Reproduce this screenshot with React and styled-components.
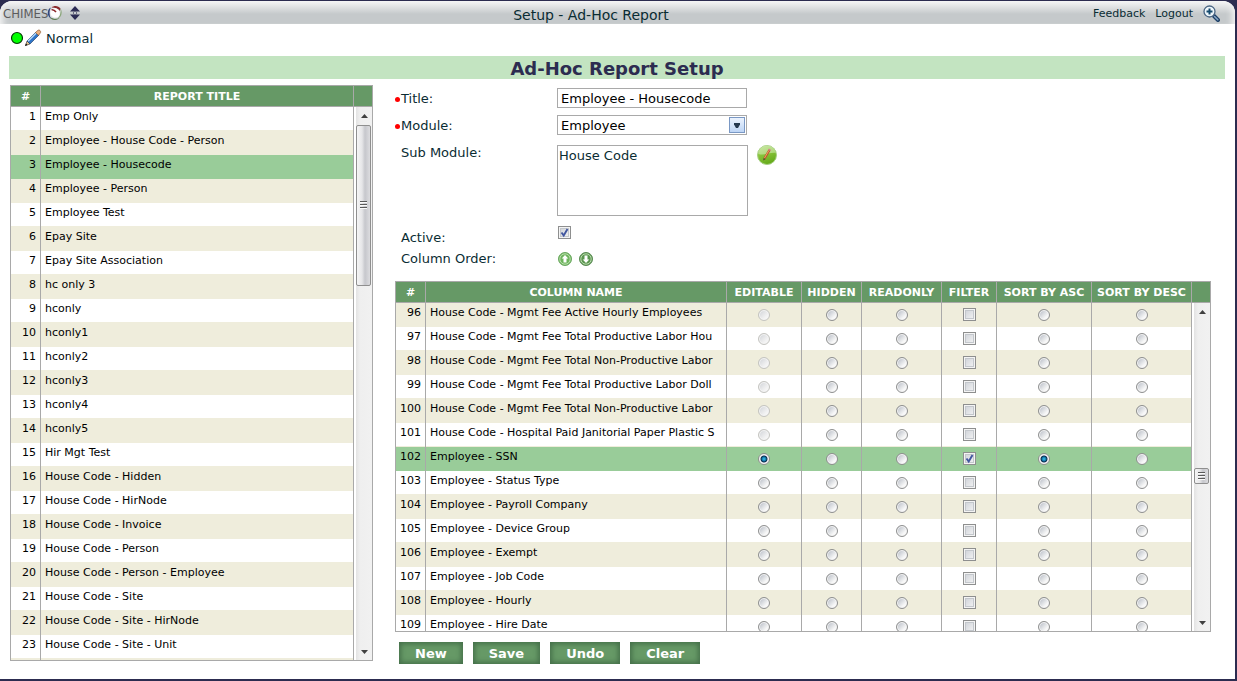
import React from "react";
import styled, { createGlobalStyle, css } from "styled-components";

const color = {
  frame: "#2c2c50",
  green: "#669966",
  line: "#a9a9a9",
  stripe: "#efeddc",
  selected: "#99cc99",
  band: "#c3e4c1",
  label: "#0a2c33",
};

const GlobalStyle = createGlobalStyle`
  * { box-sizing: border-box; }
  body {
    margin: 0;
    background: ${color.frame};
    font-family: Verdana, "DejaVu Sans", sans-serif;
    font-size: 13px;
    color: ${color.label};
  }
  button, input, select, textarea { font: inherit; }
`;

const Frame = styled.div`
  height: 100vh;
  padding: 1px 2px 2px 0;
`;

const Page = styled.div`
  height: 100%;
  display: flex;
  flex-direction: column;
  background: #fff;
  border-radius: 12px 12px 0 0;
  overflow: hidden;
`;

const TopBar = styled.header`
  flex: none;
  height: 23px;
  display: flex;
  align-items: center;
  background: linear-gradient(#f6f6f6 0, #e0e2e3 6px, #c5c9cb 13px, #c5c9cb 100%);
  box-shadow: inset 8px 0 6px -5px #f4f4f4, inset -8px 0 6px -5px #f4f4f4;
`;

const Brand = styled.div`
  flex: 0 0 90px;
  display: flex;
  align-items: center;
  padding: 1px 0 0 3px;
`;

const BrandName = styled.span`
  font: 13px "DejaVu Sans Condensed", Roboto, sans-serif;
  color: #5c5c5e;
  width: 44px;
  white-space: nowrap;
`;

const IconButton = styled.button`
  display: block;
  padding: 0;
  border: 0;
  background: none;
  line-height: 0;
  margin-left: ${(p) => p.$gap || 0}px;
`;

const PageName = styled.div`
  flex: 1;
  text-align: center;
  font-size: 14px;
  padding-top: 4px;
  line-height: 16px;
`;

const Nav = styled.nav`
  display: flex;
  align-items: center;
  gap: 10px;
  padding: 2px 15px 0 1px;
  font-size: 11px;
  line-height: 16px;
`;

const NavLink = styled.a`
  color: ${color.label};
  text-decoration: none;
`;

const Status = styled.div`
  flex: none;
  height: 32px;
  display: flex;
  align-items: center;
  padding: 0 10px 4px;
`;

const StatusText = styled.span`
  padding-left: 4px;
`;

const Banner = styled.h1`
  flex: none;
  margin: 0 10px 6px 9px;
  height: 23px;
  line-height: 25px;
  background: ${color.band};
  color: ${color.frame};
  font-size: 18px;
  font-weight: bold;
  text-align: center;
`;

const Main = styled.main`
  flex: 1;
  min-height: 0;
  display: flex;
  gap: 22px;
  padding: 0 15px 15px 10px;
`;

const Sidebar = styled.section`
  flex: 0 0 30%;
  display: flex;
  padding-bottom: 3px;
`;

const Detail = styled.section`
  flex: 1;
  min-width: 0;
  display: flex;
  flex-direction: column;
  padding-right: 9px;
`;

/* Grids */

const GridPanel = styled.div`
  flex: 1;
  min-width: 0;
  min-height: 0;
  display: flex;
  border: 1px solid ${color.line};
  overflow: hidden;
`;

const Viewport = styled.div`
  flex: 1;
  min-width: 0;
  overflow: hidden;
`;

const Table = styled.table`
  width: 100%;
  table-layout: fixed;
  border-collapse: separate;
  border-spacing: 0;
  font-size: 11px;
  color: #000;
`;

const Col = styled.col`
  width: ${(p) => (p.$w ? `${p.$w}px` : "auto")};
`;

const headCell = css`
  height: 21px;
  background: ${color.green};
  border-bottom: 1px solid ${color.line};
`;

const Th = styled.th`
  ${headCell}
  padding: 2px 0 0;
  border-right: 1px solid ${color.line};
  color: #fff;
  line-height: 18px;
  white-space: nowrap;
`;

const Row = styled.tr`
  background: ${(p) => (p.$selected ? color.selected : p.$striped ? color.stripe : "#fff")};
  --edge: ${(p) => (p.$selected ? color.selected : color.stripe)};
`;

const Td = styled.td`
  height: 24px;
  padding: 3px 4px 7px;
  border-right: 1px solid ${color.line};
  box-shadow: inset 0 -1px var(--edge);
  line-height: 14px;
  text-align: ${(p) => p.$align || "left"};
  white-space: nowrap;
  overflow: hidden;
`;

const ControlTd = styled(Td)`
  padding: 0 0 1px;
  line-height: 0;
  text-align: center;
`;

const boxBase = css`
  appearance: none;
  margin: 0;
  vertical-align: middle;
`;

const Radio = styled.input.attrs({ type: "radio" })`
  ${boxBase}
  width: 12px;
  height: 12px;
  border: 1px solid #8e8f8f;
  border-radius: 50%;
  background: linear-gradient(135deg, #bfc4cc 2px, #f8f8f8 10px);
  box-shadow: inset 0 0 0 1px #f4f4f4;
  &:checked {
    background: radial-gradient(circle, #3fc4ee 0, #0d76a8 2px, #0b2a48 3px, #f4f4f4 4px);
  }
  &:disabled {
    border-color: #c4c4c0;
    background: linear-gradient(135deg, #d6d8dc 2px, #f4f4f4 10px);
  }
`;

const CheckBox = styled.input.attrs({ type: "checkbox" })`
  ${boxBase}
  width: 13px;
  height: 13px;
  border: 1px solid #8e8f8f;
  background: linear-gradient(135deg, #cbcfd5, #f6f6f6);
  box-shadow: inset 0 0 0 1px #f4f4f4, inset 0 0 0 2px #c3c7cc;
`;

const CheckWrap = styled.span`
  display: inline-grid;
  vertical-align: middle;
  > * { grid-area: 1 / 1; }
  > svg { pointer-events: none; }
`;

const ScrollColumn = styled.div`
  flex: 0 0 18px;
  display: flex;
  flex-direction: column;
`;

const ScrollHead = styled.div`
  ${headCell}
  flex: none;
`;

const ScrollTrack = styled.div`
  flex: 1;
  margin-left: 2px;
  display: flex;
  flex-direction: column;
  background: linear-gradient(90deg, #e3e3e3, #efefef 4px, #f1f1f1);
`;

const ScrollArrow = styled.button`
  flex: 0 0 17px;
  padding: 0;
  border: 0;
  background: none;
  line-height: 0;
`;

const ScrollSpace = styled.div`
  flex: ${(p) => p.$grow} 1 0;
`;

const ScrollThumb = styled.div`
  flex: 0 0 ${(p) => p.$size}px;
  width: 15px;
  border: 1px solid #8f8f8f;
  border-radius: 2px;
  background: linear-gradient(90deg, #f5f5f5 0, #e6e6e8 5px, #c6c7cc 8px, #dcdcdf 13px);
  display: grid;
  place-items: center;
`;

/* Form */

const Field = styled.div`
  flex: none;
  display: flex;
  align-items: ${(p) => p.$align || "center"};
  min-height: ${(p) => p.$height || 20}px;
  margin-top: ${(p) => p.$gap}px;
`;

const Label = styled.label`
  flex: 0 0 162px;
  display: flex;
  align-items: center;
  padding-left: ${(p) => (p.$required ? 0 : 6)}px;
  padding-top: ${(p) => (p.$required ? 2 : 0)}px;
  line-height: 16px;
`;

const Dot = styled.span`
  width: 5px;
  height: 5px;
  margin-right: 1px;
  border-radius: 50%;
  background: #f00;
`;

const inputBox = css`
  border: 1px solid ${color.line};
  border-radius: 0;
  background: #fff;
  outline: 0;
`;

const TextInput = styled.input`
  ${inputBox}
  width: 190px;
  height: 20px;
  padding: 0 3px;
  color: #000;
`;

const SelectBox = styled.div`
  ${inputBox}
  display: grid;
  width: 190px;
  height: 20px;
  align-items: center;
  > * { grid-area: 1 / 1; }
  > svg { justify-self: end; margin-right: 1px; pointer-events: none; }
`;

const Select = styled.select`
  appearance: none;
  width: 100%;
  height: 18px;
  padding: 0 3px;
  border: 0;
  outline: 0;
  background: none;
  color: #000;
`;

const TextArea = styled.textarea`
  ${inputBox}
  width: 191px;
  height: 71px;
  padding: 2px 1px;
  resize: none;
  line-height: 16px;
  color: ${color.label};
`;

const OrderButtons = styled.div`
  display: flex;
  gap: 7px;
  padding-left: 1px;
`;

const ActiveBox = styled.span`
  align-self: flex-start;
  padding-left: 1px;
  line-height: 0;
`;

const GridArea = styled.div`
  flex: 1;
  min-height: 0;
  display: flex;
  margin-top: 14px;
`;

const Actions = styled.div`
  flex: none;
  display: flex;
  gap: 10px;
  padding: 10px 4px 0;
`;

const ActionButton = styled.button`
  height: 22px;
  padding: 1px 16px 0;
  border: 0;
  background: ${color.green};
  box-shadow: inset 0 0 5px 2px #45704a;
  color: #fff;
  font-weight: bold;
  line-height: 20px;
`;

/* Icons */

const Swirl = () => (
  <svg width="16" height="16" viewBox="0 0 16 16" fill="none">
    <circle cx="8" cy="8" r="6.500" fill="#dfe2e4" />
    <path d="M4.500 2.500C7 .2 11.500.5 13.500 3.500L13 6C11.500 3.500 8 2.500 4.500 2.500Z" fill="#8c2a2c" />
    <path d="M13.500 3.500c2.200 3.500 1.300 7.500-1.500 9.500l-1.500.5c2.500-2.500 3.500-6 3-10Z" fill="#8ba67c" />
    <path d="M12.500 13c-2.500 2.500-6 2.700-8.500.8l-1-1.800c3 2 6.500 2.300 9.500 1Z" fill="#5f7f55" />
    <path d="M4 13.800C.5 11.500-.2 7 2 3.800L4 2.500C2 6 2.200 10 4 13.800Z" fill="#34477c" />
    <path d="M4.500 4c3-1.500 7-.5 8 3s-1 5-3.500 5.500S3.500 11 3.500 8c0-1.500.3-3 1-4Z" fill="#fff" />
    <path d="M4.500 4.500c2 .2 3.500 1 4.500 2.500" stroke="#8c2a2c" strokeWidth="1.500" />
  </svg>
);

const UpDown = () => (
  <svg width="10" height="14" viewBox="0 0 10 14">
    <path d="M5 0l5 5.500H0zM5 14l5-5.500H0z" fill="#2c2c55" />
    <circle cx="5" cy="7" r="1.700" fill="#c9cdd2" stroke="#53536f" strokeWidth=".8" />
  </svg>
);

const Magnifier = () => (
  <svg width="17" height="17" viewBox="0 0 17 17" fill="none">
    <path d="M10 10l5 5" stroke="#1d3f66" strokeWidth="4" strokeLinecap="round" />
    <path d="M11.500 11.500l3.300 3.300" stroke="#86a6c6" strokeWidth="1.500" strokeLinecap="round" />
    <circle cx="6.500" cy="6.500" r="5.500" fill="#eef6fb" stroke="#4a6583" strokeWidth="1.300" />
    <path d="M6.500 3.500v6M3.500 6.500h6" stroke="#14496d" strokeWidth="2" />
  </svg>
);

const StatusDot = () => (
  <svg width="14" height="14" viewBox="0 0 14 14">
    <circle cx="7" cy="7" r="5.500" fill="#0f0" stroke="#063806" strokeWidth="1.200" />
  </svg>
);

const Pencil = () => (
  <svg width="18" height="18" viewBox="0 0 18 18">
    <path d="M1.500 16.500L3 12l3 3z" fill="#e8c48a" stroke="#2b2b2b" strokeWidth=".6" />
    <path d="M3 12L12 3l3 3L6 15z" fill="#2f76c9" stroke="#1b3358" strokeWidth=".6" />
    <path d="M4 12.300l8.500-8.500" stroke="#b5dafa" strokeWidth="1.500" />
    <path d="M11.500 3.500L14 1.200q1.200-.6 2 .3t.6 2L14.500 6.500z" fill="#eeb07a" stroke="#7a4a22" strokeWidth=".6" />
    <path d="M1 17l1-2.500L3.500 16z" fill="#111" />
  </svg>
);

const DropIcon = () => (
  <svg width="16" height="16" viewBox="0 0 16 16">
    <defs>
      <linearGradient id="drop" x2="0" y2="1">
        <stop offset="0" stopColor="#edf4fe" />
        <stop offset="1" stopColor="#bcd4f5" />
      </linearGradient>
    </defs>
    <rect x=".5" y=".5" width="15" height="15" fill="url(#drop)" stroke="#7a98c4" />
    <path d="M5 6h6v1.500L9 11H7L5 7.500z" fill="#24384f" />
  </svg>
);

const EditIcon = () => (
  <svg width="20" height="20" viewBox="0 0 20 20">
    <defs>
      <linearGradient id="edit" x2=".4" y2="1">
        <stop offset="0" stopColor="#b9e08a" />
        <stop offset=".45" stopColor="#8cc63e" />
        <stop offset="1" stopColor="#67ab1c" />
      </linearGradient>
    </defs>
    <circle cx="10" cy="10" r="9.500" fill="url(#edit)" stroke="#a6cf83" />
    <path d="M1.500 9a8.500 8 0 0 1 17-1C14 7 7 11 1.500 9Z" fill="#d9efbd" opacity=".55" />
    <path d="M7.500 13.500L12.500 5" stroke="#b8552a" strokeWidth="2.400" />
    <path d="M7.500 13L12 5.300" stroke="#f2a065" />
    <path d="M12.200 5.400l.7-1.300" stroke="#d77f8f" strokeWidth="2.400" />
    <path d="M6.200 15.500l.4-2.500 2 1.200z" fill="#5a4230" />
  </svg>
);

const OrderIcon = ({ down }) => (
  <svg width="14" height="14" viewBox="0 0 14 14">
    <circle cx="7" cy="7" r="6.500" fill={down ? "#5b9650" : "#6db45c"} stroke={down ? "#5a8a54" : "#6aa860"} />
    <circle cx="7" cy="7" r="5.200" fill="none" stroke="#c4e2b8" strokeWidth=".9" />
    <path
      d="M7 3l3.300 3.500H8.500V10.500h-3V6.500H3.700z"
      fill="#fff"
      transform={down ? "rotate(180 7 7)" : undefined}
    />
  </svg>
);

const Tick = () => (
  <svg width="13" height="13" viewBox="0 0 13 13" fill="none">
    <path d="M3.500 6.500l2.200 3L9.500 3" stroke="#4257a0" strokeWidth="1.900" />
  </svg>
);

const Arrow = ({ down }) => (
  <svg width="7" height="4" viewBox="0 0 7 4">
    <path d={down ? "M0 0h7L3.500 4z" : "M0 4h7L3.500 0z"} fill="#404040" />
  </svg>
);

const Grip = () => (
  <svg width="7" height="9" viewBox="0 0 7 9">
    <path d="M0 .5h7M0 3.500h7M0 6.500h7" stroke="#5a5a5a" />
    <path d="M0 1.500h7M0 4.500h7M0 7.500h7" stroke="#fafafa" />
  </svg>
);

const Check = (props) => (
  <CheckWrap>
    <CheckBox {...props} />
    {props.defaultChecked && <Tick />}
  </CheckWrap>
);

const ScrollBar = ({ before, size, after }) => (
  <ScrollColumn>
    <ScrollHead />
    <ScrollTrack>
      <ScrollArrow type="button" aria-label="Scroll up"><Arrow /></ScrollArrow>
      <ScrollSpace $grow={before} />
      <ScrollThumb $size={size}><Grip /></ScrollThumb>
      <ScrollSpace $grow={after} />
      <ScrollArrow type="button" aria-label="Scroll down"><Arrow down /></ScrollArrow>
    </ScrollTrack>
  </ScrollColumn>
);

const reports = [
  "Emp Only", "Employee - House Code - Person", "Employee - Housecode", "Employee - Person",
  "Employee Test", "Epay Site", "Epay Site Association", "hc only 3", "hconly", "hconly1",
  "hconly2", "hconly3", "hconly4", "hconly5", "Hir Mgt Test", "House Code - Hidden",
  "House Code - HirNode", "House Code - Invoice", "House Code - Person",
  "House Code - Person - Employee", "House Code - Site", "House Code - Site - HirNode",
  "House Code - Site - Unit",
];

const columns = [
  "House Code - Mgmt Fee Active Hourly Employees",
  "House Code - Mgmt Fee Total Productive Labor Hou",
  "House Code - Mgmt Fee Total Non-Productive Labor",
  "House Code - Mgmt Fee Total Productive Labor Doll",
  "House Code - Mgmt Fee Total Non-Productive Labor",
  "House Code - Hospital Paid Janitorial Paper Plastic S",
  "Employee - SSN", "Employee - Status Type", "Employee - Payroll Company",
  "Employee - Device Group", "Employee - Exempt", "Employee - Job Code",
  "Employee - Hourly", "Employee - Hire Date",
].map((name, i) => ({ id: 96 + i, name, locked: i < 6, selected: i === 6 }));

const ReportGrid = () => (
  <GridPanel>
    <Viewport>
      <Table>
        <colgroup><Col $w={30} /><Col /></colgroup>
        <thead><tr><Th>#</Th><Th>REPORT TITLE</Th></tr></thead>
        <tbody>
          {reports.map((name, i) => (
            <Row key={name} $striped={i % 2 === 1} $selected={i === 2}>
              <Td $align="right">{i + 1}</Td>
              <Td>{name}</Td>
            </Row>
          ))}
          <Row $striped><Td /><Td /></Row>
        </tbody>
      </Table>
    </Viewport>
    <ScrollBar before={1} size={161} after={357} />
  </GridPanel>
);

const ColumnGrid = () => (
  <GridPanel>
    <Viewport>
      <Table>
        <colgroup>
          <Col $w={30} /><Col /><Col $w={75} /><Col $w={60} /><Col $w={80} />
          <Col $w={55} /><Col $w={95} /><Col $w={100} />
        </colgroup>
        <thead>
          <tr>
            <Th>#</Th><Th>COLUMN NAME</Th><Th>EDITABLE</Th><Th>HIDDEN</Th>
            <Th>READONLY</Th><Th>FILTER</Th><Th>SORT BY ASC</Th><Th>SORT BY DESC</Th>
          </tr>
        </thead>
        <tbody>
          {columns.map(({ id, name, locked, selected }) => (
            <Row key={id} $striped={id % 2 === 0} $selected={selected}>
              <Td $align="right">{id}</Td>
              <Td>{name}</Td>
              <ControlTd><Radio name={`mode-${id}`} aria-label="Editable" disabled={locked} defaultChecked={selected} /></ControlTd>
              <ControlTd><Radio name={`mode-${id}`} aria-label="Hidden" /></ControlTd>
              <ControlTd><Radio name={`mode-${id}`} aria-label="Readonly" /></ControlTd>
              <ControlTd><Check aria-label="Filter" defaultChecked={selected} /></ControlTd>
              <ControlTd><Radio name={`sort-${id}`} aria-label="Sort by asc" defaultChecked={selected} /></ControlTd>
              <ControlTd><Radio name={`sort-${id}`} aria-label="Sort by desc" /></ControlTd>
            </Row>
          ))}
        </tbody>
      </Table>
    </Viewport>
    <ScrollBar before={148} size={16} after={130} />
  </GridPanel>
);

export default function App() {
  return (
    <Frame>
      <GlobalStyle />
      <Page>
        <TopBar>
          <Brand>
            <BrandName>CHIMES</BrandName>
            <Swirl />
            <IconButton type="button" aria-label="Toggle menu" $gap={7}><UpDown /></IconButton>
          </Brand>
          <PageName>Setup - Ad-Hoc Report</PageName>
          <Nav>
            <NavLink href="#feedback">Feedback</NavLink>
            <NavLink href="#logout">Logout</NavLink>
            <IconButton type="button" aria-label="Zoom"><Magnifier /></IconButton>
          </Nav>
        </TopBar>
        <Status>
          <StatusDot />
          <Pencil />
          <StatusText>Normal</StatusText>
        </Status>
        <Banner>Ad-Hoc Report Setup</Banner>
        <Main>
          <Sidebar><ReportGrid /></Sidebar>
          <Detail>
            <Field $gap={3}>
              <Label htmlFor="title" $required><Dot />Title:</Label>
              <TextInput id="title" defaultValue="Employee - Housecode" />
            </Field>
            <Field $gap={7}>
              <Label htmlFor="module" $required><Dot />Module:</Label>
              <SelectBox>
                <Select id="module" defaultValue="Employee"><option>Employee</option></Select>
                <DropIcon />
              </SelectBox>
            </Field>
            <Field $gap={10} $align="flex-start">
              <Label htmlFor="submodule">Sub Module:</Label>
              <TextArea id="submodule" readOnly defaultValue="House Code" />
              <IconButton type="button" aria-label="Edit sub modules" $gap={9}><EditIcon /></IconButton>
            </Field>
            <Field $gap={10} $align="flex-end">
              <Label htmlFor="active">Active:</Label>
              <ActiveBox><Check id="active" defaultChecked /></ActiveBox>
            </Field>
            <Field $gap={5} $height={16}>
              <Label as="span">Column Order:</Label>
              <OrderButtons>
                <IconButton type="button" aria-label="Move column up"><OrderIcon /></IconButton>
                <IconButton type="button" aria-label="Move column down"><OrderIcon down /></IconButton>
              </OrderButtons>
            </Field>
            <GridArea><ColumnGrid /></GridArea>
            <Actions>
              <ActionButton type="button">New</ActionButton>
              <ActionButton type="button">Save</ActionButton>
              <ActionButton type="button">Undo</ActionButton>
              <ActionButton type="button">Clear</ActionButton>
            </Actions>
          </Detail>
        </Main>
      </Page>
    </Frame>
  );
}
